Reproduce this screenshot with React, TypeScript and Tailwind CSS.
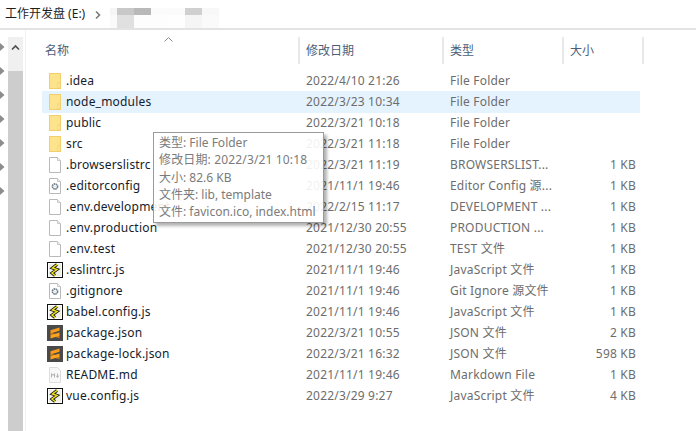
const font = { fontFamily: '"Noto Sans", "Noto Sans CJK SC", sans-serif' };

type Kind = 'folder' | 'file' | 'gear' | 'js' | 'sublime' | 'md';

const rows: [Kind, string, string, string, string][] = [
  ['folder', '.idea', '2022/4/10 21:26', 'File Folder', ''],
  ['folder', 'node_modules', '2022/3/23 10:34', 'File Folder', ''],
  ['folder', 'public', '2022/3/21 10:18', 'File Folder', ''],
  ['folder', 'src', '2022/3/21 11:18', 'File Folder', ''],
  ['file', '.browserslistrc', '2022/3/21 11:19', 'BROWSERSLIST...', '1 KB'],
  ['gear', '.editorconfig', '2021/11/1 19:46', 'Editor Config 源...', '1 KB'],
  ['file', '.env.development', '2022/2/15 11:17', 'DEVELOPMENT ...', '1 KB'],
  ['file', '.env.production', '2021/12/30 20:55', 'PRODUCTION ...', '1 KB'],
  ['file', '.env.test', '2021/12/30 20:55', 'TEST 文件', '1 KB'],
  ['js', '.eslintrc.js', '2021/11/1 19:46', 'JavaScript 文件', '1 KB'],
  ['gear', '.gitignore', '2021/11/1 19:46', 'Git Ignore 源文件', '1 KB'],
  ['js', 'babel.config.js', '2021/11/1 19:46', 'JavaScript 文件', '1 KB'],
  ['sublime', 'package.json', '2022/3/21 10:55', 'JSON 文件', '2 KB'],
  ['sublime', 'package-lock.json', '2022/3/21 16:32', 'JSON 文件', '598 KB'],
  ['md', 'README.md', '2021/11/1 19:46', 'Markdown File', '1 KB'],
  ['js', 'vue.config.js', '2022/3/29 9:27', 'JavaScript 文件', '4 KB'],
];

function Sheet({ children }: { children?: React.ReactNode }) {
  return (
    <svg width="16" height="18" viewBox="0 0 16 18" className="shrink-0">
      <path d="M2.5 1.5H10.5L13.5 4.5V16.5H2.5Z" fill="#fff" stroke="#b9b9b9" />
      <path d="M10.5 1.5V4.5H13.5" fill="#f2f2f2" stroke="#c9c9c9" />
      {children}
    </svg>
  );
}

function Icon({ kind }: { kind: Kind }) {
  if (kind === 'folder')
    return (
      <svg width="16" height="18" viewBox="0 0 16 18" className="shrink-0">
        <rect x="2.5" y="1.5" width="11" height="15" fill="#fde38c" stroke="#f2cf6b" />
        <rect x="11" y="11" width="2" height="5" fill="#fdf0bd" stroke="#f2cf6b" strokeWidth="0.8" />
      </svg>
    );
  if (kind === 'file') return <Sheet />;
  if (kind === 'gear')
    return (
      <Sheet>
        <circle cx="8" cy="9.5" r="2.6" fill="none" stroke="#6f7f8c" strokeWidth="1.6" strokeDasharray="1.6 0.5" />
        <circle cx="8" cy="9.5" r="0.9" fill="#dfe4e8" />
      </Sheet>
    );
  if (kind === 'md')
    return (
      <svg width="16" height="18" viewBox="0 0 16 18" className="shrink-0">
        <path d="M2.5 1.5H10.5L13.5 4.5V16.5H2.5Z" fill="#f8f8f8" stroke="#dedede" />
        <path d="M4.5 11.5V7.5L6 9.5L7.5 7.5V11.5M10.5 7.5V11M9 9.5L10.5 11.5L12 9.5" fill="none" stroke="#b5b5b5" />
      </svg>
    );
  if (kind === 'sublime')
    return (
      <svg width="16" height="16" viewBox="0 0 16 16" className="shrink-0">
        <rect width="16" height="16" fill="#4a4a4a" />
        <path d="M12.5 2.5V5.8L3.5 8.5V5.2Z" fill="#f89a1c" />
        <path d="M3.5 7.5V10.5L12.5 13.2V10.2Z" fill="#c97a16" />
        <path d="M12.5 7.5V10.8L3.5 13.5V10.2Z" fill="#fba21f" />
      </svg>
    );
  return (
    <svg width="16" height="16" viewBox="0 0 16 16" className="shrink-0">
      <rect x="0.5" y="0.5" width="15" height="15" fill="#fff" stroke="#111" />
      <rect x="2" y="2" width="12" height="12" fill="#eef0e6" />
      <path d="M10 2.5L5.5 6L10 7.5L5 11L8 13.5" fill="none" stroke="#111" strokeWidth="3" />
      <path d="M10 2.5L5.5 6L10 7.5L5 11L8 13.5" fill="none" stroke="#f2e318" strokeWidth="1.5" />
    </svg>
  );
}

function HeaderCell({ label, className }: { label: string; className: string }) {
  return (
    <div className={`h-[27px] flex items-center border-r-2 border-[#e8e8e8] text-[#4c607a] ${className}`}>
      {label}
    </div>
  );
}

export default function App() {
  return (
    <div className="relative w-[696px] h-[431px] overflow-hidden bg-white text-[12px] leading-none" style={font}>
      <div className="h-[30px] flex items-start border-b-2 border-[#e3e3e3]">
        <span className="ml-[5px] mt-[8px] text-[12px] text-[#1e1e1e] w-[89px]">工作开发盘 (E:)</span>
        <svg width="8" height="10" viewBox="0 0 8 10" className="mt-[10px]">
          <path d="M2 1.5L5.5 5L2 8.5" fill="none" stroke="#7a7a7a" strokeWidth="1.6" />
        </svg>
        <div className="ml-[8px] mt-[8px] flex flex-col">
          <div className="flex h-[7px]">
            <div className="w-[7px] bg-[#f5f5f5]" />
            <div className="w-[17px] bg-[#c8c8c8]" />
            <div className="w-[17px] bg-[#b9b9b9]" />
            <div className="w-[34px] bg-[#fbfbfb]" />
            <div className="w-[17px] bg-[#d0d0d0]" />
            <div className="w-[17px] bg-[#f8f8f8]" />
          </div>
          <div className="flex h-[13px]">
            <div className="w-[7px] bg-[#fafafa]" />
            <div className="w-[17px] bg-[#e0e0e0]" />
            <div className="w-[34px] bg-[#fdfdfd]" />
            <div className="w-[17px] bg-[#fefefe]" />
            <div className="w-[17px] bg-[#f5f5f5]" />
            <div className="w-[17px] bg-[#fafafa]" />
          </div>
        </div>
      </div>

      <div className="flex h-[401px]">
        <div className="w-[8px] shrink-0 flex flex-col pt-[13px] gap-[16px]">
          {[0, 1, 2, 3, 4, 5, 6].map((i) => (
            <svg key={i} width="5" height="8" viewBox="0 0 5 8" className="shrink-0">
              <path d="M0 0L4.5 4L0 8Z" fill="#8c8c8c" />
            </svg>
          ))}
        </div>
        <div className="w-[15px] shrink-0 mt-[7px] flex flex-col bg-[#f0f0f0]">
          <div className="h-[34px] flex justify-center pt-[7px]">
            <svg width="9" height="7" viewBox="0 0 9 7">
              <path d="M1 5.5L4.5 2L8 5.5" fill="none" stroke="#505050" strokeWidth="1.7" />
            </svg>
          </div>
          <div className="flex-1 bg-[#cdcdcd]" />
        </div>
        <div className="w-[3px] shrink-0 border-r border-[#f2f2f2]" />

        <div className="flex-1 min-w-0 relative pl-[16px]">
          <svg width="9" height="5" viewBox="0 0 9 5" className="absolute left-[138px] top-[7px]">
            <path d="M0.5 4.5L4.5 0.5L8.5 4.5" fill="none" stroke="#8a8a8a" />
          </svg>
          <div className="flex pt-[7px] w-[616px]">
            <HeaderCell label="名称" className="w-[258px] pl-[3px]" />
            <HeaderCell label="修改日期" className="w-[144px] pl-[6px]" />
            <HeaderCell label="类型" className="w-[120px] pl-[6px]" />
            <HeaderCell label="大小" className="w-[80px] pl-[6px]" />
          </div>
          <div className="mt-[6px] w-[598px] tracking-[0.2px]">
            {rows.map(([kind, name, date, type, size], i) => (
              <div
                key={name}
                className={`h-[21px] flex items-center ${i === 1 ? 'bg-[#e5f3ff] shadow-[0_1px_0_#e5f3ff]' : ''}`}
              >
                <div className="w-[24px] shrink-0 flex justify-center pl-[1px]">
                  <Icon kind={kind} />
                </div>
                <div className="w-[240px] shrink-0 text-[#141c2b] whitespace-nowrap">{name}</div>
                <div className="w-[144px] shrink-0 text-[#6d6d6d] whitespace-nowrap">{date}</div>
                <div className="w-[100px] shrink-0 text-[#6d6d6d] whitespace-nowrap">{type}</div>
                <div className="w-[86px] shrink-0 text-right text-[#6d6d6d] whitespace-nowrap">{size}</div>
              </div>
            ))}
          </div>
        </div>
      </div>

      <div className="absolute left-[153px] top-[132px] w-[171px] h-[91px] border border-[#9b9b9b] bg-white/90 shadow-[3px_3px_3px_rgba(0,0,0,0.3)] pl-[5px] pt-[1px] text-[#7b7b7b] leading-[17.3px] whitespace-nowrap">
        <div>类型: File Folder</div>
        <div className="tracking-[0.15px]">修改日期: 2022/3/21 10:18</div>
        <div>大小: 82.6 KB</div>
        <div>文件夹: lib, template</div>
        <div>文件: favicon.ico, index.html</div>
      </div>
    </div>
  );
}
